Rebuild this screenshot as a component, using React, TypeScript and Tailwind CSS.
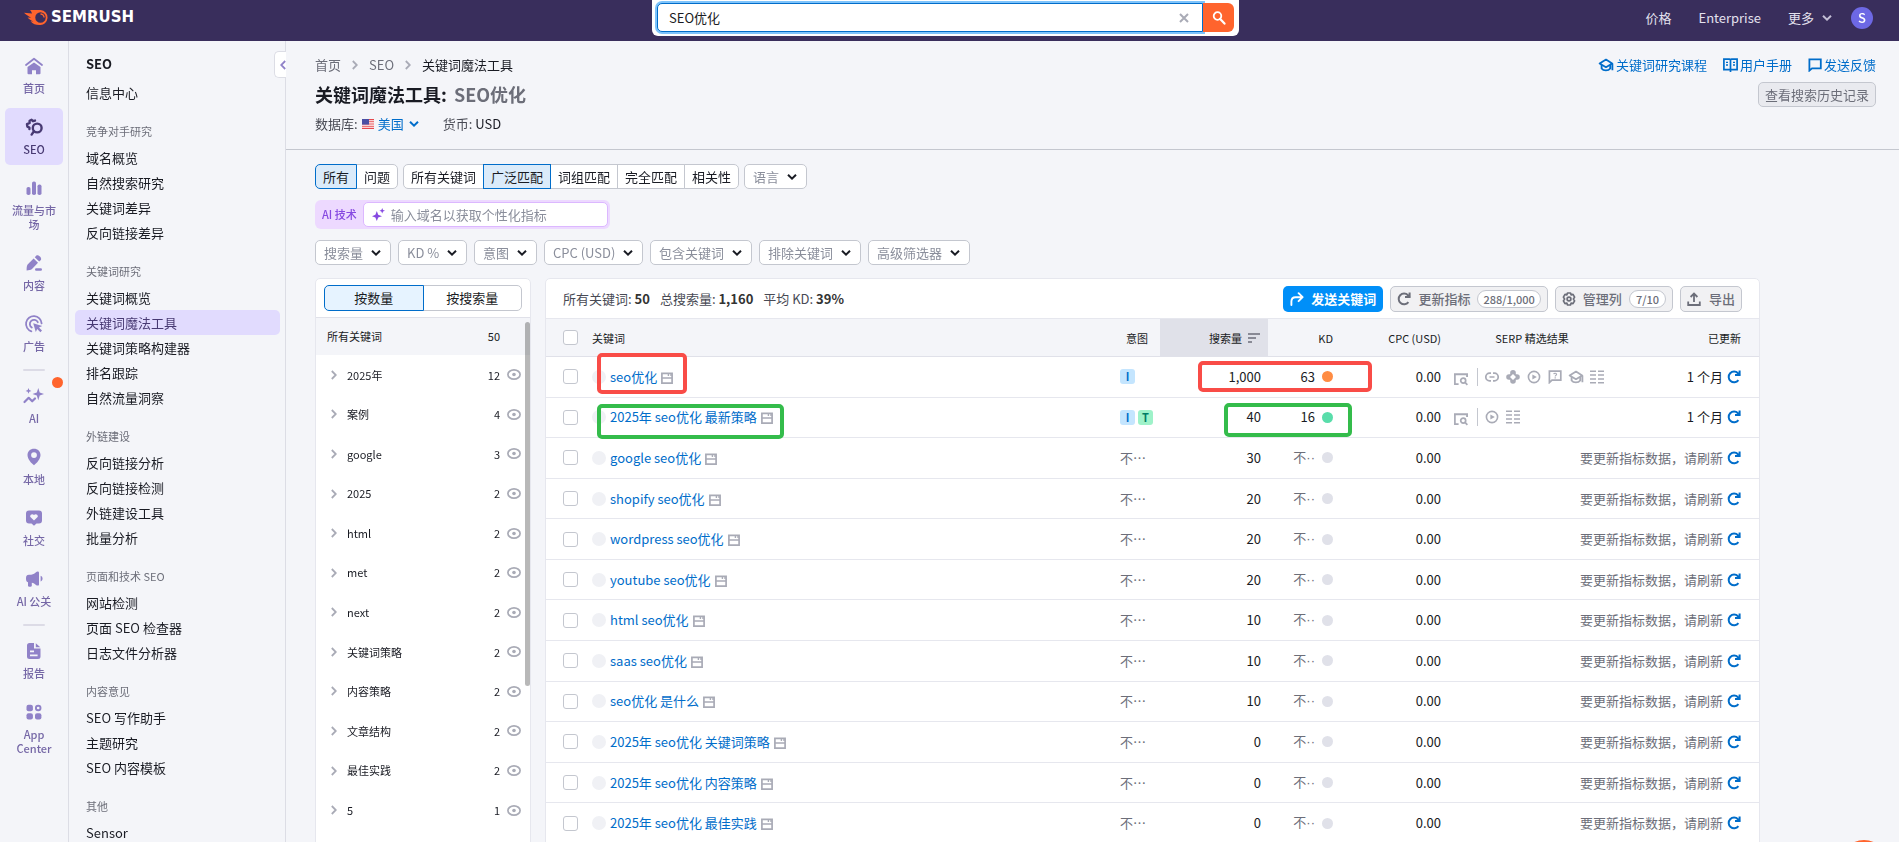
import React, { useState } from 'react';
import clsx from 'clsx';

interface IconProps {
  className?: string;
}

interface RailEntry {
  label: string;
  icon: React.ReactNode;
  active?: boolean;
  dot?: boolean;
  divider?: boolean;
}

interface Keyword {
  text: string;
  volume: string;
  kd?: { value: string; color: string };
  intents?: string[];
  serp?: string[];
  updated?: string;
  keywordMark?: string;
  metricMark?: string;
}

/* ---------- icons ---------- */

function ChevronDown({ className }: IconProps) {
  return (
    <svg viewBox="0 0 10 6" fill="none" stroke="currentColor" strokeWidth="2" className={clsx('h-[6px] w-[10px]', className)}>
      <path d="M1 .8 5 4.6 9 .8" />
    </svg>
  );
}

function ChevronRight({ className }: IconProps) {
  return (
    <svg viewBox="0 0 6 10" fill="none" stroke="currentColor" strokeWidth="1.8" className={clsx('h-[10px] w-[6px]', className)}>
      <path d="M.8 1 4.8 5 .8 9" />
    </svg>
  );
}

function Refresh({ className }: IconProps) {
  return (
    <svg viewBox="0 0 14 14" fill="none" stroke="currentColor" strokeWidth="2" className={clsx('h-[14px] w-[14px]', className)}>
      <path d="M11.4 10.2A5.4 5.4 0 1 1 11 3.2L12.6 5" />
      <path d="M12.6 .6V5H8" />
    </svg>
  );
}

function Cap({ className }: IconProps) {
  return (
    <svg viewBox="0 0 16 14" fill="none" stroke="currentColor" strokeWidth="1.8" className={clsx('h-[14px] w-[16px]', className)}>
      <path d="M1.6 5.4 8 1.6l6.2 3.8L8 9.2z" strokeLinejoin="round" />
      <path d="M3.6 7v3.4C5.4 13 10.4 13 12.2 10.4V7M14.4 5.4v6.8" />
    </svg>
  );
}

function Sparkles({ className }: IconProps) {
  return (
    <svg viewBox="0 0 13 13" fill="currentColor" className={clsx('h-[13px] w-[13px] shrink-0', className)}>
      <path d="M4.8 3 6.2 6.8 10 8.2 6.2 9.6 4.8 13 3.4 9.6 0 8.2 3.4 6.8z" />
      <path d="M10.2 0 11 2l2 .8-2 .8-.8 2-.8-2-2-.8 2-.8z" />
    </svg>
  );
}

function Eye() {
  return (
    <svg viewBox="0 0 14 11" fill="none" stroke="#a9abb6" strokeWidth="1.7" className="h-[11px] w-[14px]">
      <ellipse cx="7" cy="5.5" rx="6.1" ry="4.6" />
      <circle cx="7" cy="5.5" r="1.8" fill="#a9abb6" stroke="none" />
    </svg>
  );
}

function SerpPage() {
  return (
    <svg viewBox="0 0 12 12" fill="none" stroke="#a9abb6" strokeWidth="1.7" className="mt-0.5 h-[12px] w-[12px]">
      <path d="M.9 1.4H11.1V11.1H.9zM.9 6H11.1" />
      <path d="M7.4 1v3M10 1v3" strokeWidth="1.4" />
    </svg>
  );
}

function SerpIcon({ name }: { name: string }) {
  const common = 'h-[14px] w-[14px]';
  switch (name) {
    case 'link':
      return (
        <svg viewBox="0 0 14 14" fill="none" stroke="currentColor" strokeWidth="1.7" className={common}>
          <path d="M6 3.2H4.6a3.8 3.8 0 0 0 0 7.6H6M8 3.2h1.4a3.8 3.8 0 0 1 0 7.6H8M4.5 7h5" />
        </svg>
      );
    case 'pack':
      return (
        <svg viewBox="0 0 14 14" fill="currentColor" fillRule="evenodd" className={common}>
          <path d="M7 0a2.8 2.8 0 0 1 2.8 3v1.2H11a2.8 2.8 0 0 1 0 5.6H9.8V11a2.8 2.8 0 0 1-5.6 0V9.8H3a2.8 2.8 0 0 1 0-5.6h1.2V3A2.8 2.8 0 0 1 7 0zm0 4L4 7l3 3 3-3z" />
        </svg>
      );
    case 'video':
      return (
        <svg viewBox="0 0 14 14" fill="none" stroke="currentColor" strokeWidth="1.6" className={common}>
          <circle cx="7" cy="7" r="5.6" />
          <path d="M5.4 4.4v5.2L9.8 7z" fill="currentColor" stroke="none" />
        </svg>
      );
    case 'faq':
      return (
        <svg viewBox="0 0 14 14" fill="none" stroke="currentColor" strokeWidth="1.7" className={common}>
          <path d="M1.4 12.6V1.2H12.8V10.2H4z" />
          <path d="M5.7 4.2c.4-1.4 3-1.2 2.8.3-.1.9-1.3.9-1.3 1.9M7.2 7.3v1.2" strokeWidth="1.2" />
        </svg>
      );
    case 'cap':
      return <Cap className="-mx-px" />;
    case 'list':
      return (
        <svg viewBox="0 0 14 14" fill="none" stroke="currentColor" strokeWidth="1.6" className={common}>
          <path d="M0 1.2h6M8 1.2h6M0 5h6M8 5h6M0 9h6M8 9h6M0 12.8h6M8 12.8h6" />
        </svg>
      );
    default:
      return (
        <svg viewBox="0 0 14 14" fill="none" stroke="currentColor" strokeWidth="1.7" className={clsx(common, 'mt-1')}>
          <path d="M4.6 12.2H.9V2.4" />
          <path d="M0 2.2h14M13.1 2v3" strokeWidth="2" />
          <circle cx="9.2" cy="8.6" r="2.5" />
          <path d="m11 10.4 2.4 2.4" />
        </svg>
      );
  }
}

const rail: RailEntry[] = [
  {
    label: '首页',
    icon: (
      <>
        <path d="M1 8 9 1.8 17 8" fill="none" stroke="currentColor" strokeWidth="1.8" strokeLinecap="round" strokeLinejoin="round" />
        <path d="M9 5.4 15.5 10v6.2a1 1 0 0 1-1 1H11v-4H7v4H3.5a1 1 0 0 1-1-1V10z" />
      </>
    ),
  },
  {
    label: 'SEO',
    active: true,
    icon: (
      <>
        <circle cx="12.2" cy="10" r="4.4" fill="none" stroke="currentColor" strokeWidth="2.4" />
        <path d="M9 13.2 6.6 16.6" stroke="currentColor" strokeWidth="2.4" strokeLinecap="round" />
        <path d="M10 2.6 8 3.2 6.6 1.8 4.6 2.8V5L2 6.2 2.4 8.6 4.4 9.6V11" fill="none" stroke="currentColor" strokeWidth="2.4" strokeLinecap="round" strokeLinejoin="round" />
      </>
    ),
  },
  {
    label: '流量与市场',
    icon: (
      <>
        <rect x="1.5" y="8" width="4" height="8" rx="1.8" />
        <rect x="7" y="2.5" width="4" height="13.5" rx="1.8" />
        <rect x="12.5" y="5.5" width="4" height="10.5" rx="1.8" />
      </>
    ),
  },
  {
    label: '内容',
    icon: (
      <>
        <path d="M8.6 4.4 13 8.8 7 15c-1 1-3.4 1.4-5.4 1.5C1.6 14.5 1.6 12 2.6 10.6z" />
        <path d="m9.8 3.2 1.6-1.7c1.6-1.4 5.8 2 4.5 4.4L14.2 7.6z" />
        <rect x="10" y="14.2" width="7" height="2.6" rx="1.3" />
      </>
    ),
  },
  {
    label: '广告',
    icon: (
      <>
        <path d="M6.4 16.3A7.8 7.8 0 1 1 16.6 8.4M6.8 12.6A4.2 4.2 0 1 1 12.8 7.2" fill="none" stroke="currentColor" strokeWidth="1.8" strokeLinecap="round" />
        <path d="m8.2 8.2 9 2.8-3.2 1.4 3 3.2-1.6 1.6-3.2-3.2-1.4 3z" />
      </>
    ),
  },
  {
    label: 'AI',
    divider: true,
    dot: true,
    icon: (
      <>
        <path d="M13.3 1 14.7 5.4 19 7l-4.3 1.6-1.4 4.6-1.5-4.6L7.5 7l4.3-1.6zM3.5 1 4.3 3 6.4 3.9 4.3 4.7 3.5 6.8 2.7 4.7.6 3.9 2.7 3z" />
        <path d="m-.5 15 4.2-4.2 3.5 3.5 2.8-2.8" fill="none" stroke="currentColor" strokeWidth="2.2" strokeLinecap="round" strokeLinejoin="round" />
      </>
    ),
  },
  {
    label: '本地',
    icon: <path fillRule="evenodd" d="M9 .8c3.8 0 6.5 2.6 6.5 6.2 0 4.2-3.7 8-6.5 10.3C6.2 15 2.5 11.2 2.5 7 2.5 3.4 5.2.8 9 .8zM9 4.2a2.9 2.9 0 1 0 0 5.8 2.9 2.9 0 0 0 0-5.8z" />,
  },
  {
    label: '社交',
    icon: <path fillRule="evenodd" d="M4 1.6h10a3 3 0 0 1 3 3v6.8a3 3 0 0 1-3 3h-2.5L9 16.8l-2.5-2.4H4a3 3 0 0 1-3-3V4.6a3 3 0 0 1 3-3zM9 11.6 12.6 8c1-1.9-1.9-4-3.6-1.9C7.3 4 4.4 6.1 5.4 8z" />,
  },
  {
    label: 'AI 公关',
    icon: (
      <>
        <path d="M11 2.2c1-.9 3-.8 3 .6v11.6c0 1.4-2 1.5-3 .6-1.3-1.2-2.4-2-4.2-2.3V16c0 1-3.8 1-3.8 0v-3.8C1.4 11.8 1 10.6 1 8.6 1 6 1.6 4.8 4 4.8c3 0 5-.8 7-2.6z" />
        <path d="M15.6 5.8c2.6.6 2.6 5 0 5.6z" />
      </>
    ),
  },
  {
    label: '报告',
    divider: true,
    icon: <path fillRule="evenodd" d="M4.5 1H9v5.5h6.5v8a2.5 2.5 0 0 1-2.5 2.5H4.5A2.5 2.5 0 0 1 2 14.5v-11A2.5 2.5 0 0 1 4.5 1zm6.3.3 4.5 3.9h-4.5zM5 8.600v1.600h4V8.600zm0 4v1.700h7.600v-1.700z" />,
  },
  {
    label: 'App Center',
    icon: (
      <>
        <rect x="1.5" y="1.8" width="6.4" height="6.4" rx="2" />
        <rect x="1.5" y="10.2" width="6.4" height="6.4" rx="2" />
        <rect x="10" y="10.2" width="6.4" height="6.4" rx="2" />
        <circle cx="13.2" cy="5" r="2.3" fill="none" stroke="currentColor" strokeWidth="1.9" />
      </>
    ),
  },
];

const sections = [
  { title: '竞争对手研究', items: ['域名概览', '自然搜索研究', '关键词差异', '反向链接差异'] },
  { title: '关键词研究', items: ['关键词概览', '关键词魔法工具', '关键词策略构建器', '排名跟踪', '自然流量洞察'] },
  { title: '外链建设', items: ['反向链接分析', '反向链接检测', '外链建设工具', '批量分析'] },
  { title: '页面和技术 SEO', items: ['网站检测', '页面 SEO 检查器', '日志文件分析器'] },
  { title: '内容意见', items: ['SEO 写作助手', '主题研究', 'SEO 内容模板'] },
  { title: '其他', items: ['Sensor'] },
];

const groups: [string, number][] = [
  ['2025年', 12],
  ['案例', 4],
  ['google', 3],
  ['2025', 2],
  ['html', 2],
  ['met', 2],
  ['next', 2],
  ['关键词策略', 2],
  ['内容策略', 2],
  ['文章结构', 2],
  ['最佳实践', 2],
  ['5', 1],
];

const keywords: Keyword[] = [
  {
    text: 'seo优化',
    volume: '1,000',
    kd: { value: '63', color: 'bg-[#ff8c43]' },
    intents: ['I'],
    serp: ['link', 'pack', 'video', 'faq', 'cap', 'list'],
    updated: '1 个月',
    keywordMark: 'border-[#f94c47] left-[5px] -top-1 h-[41px] w-[90px]',
    metricMark: 'border-[#f94c47] left-[38px] top-1 h-[31px] w-[174px]',
  },
  {
    text: '2025年 seo优化 最新策略',
    volume: '40',
    kd: { value: '16', color: 'bg-[#59ddaa]' },
    intents: ['I', 'T'],
    serp: ['video', 'list'],
    updated: '1 个月',
    keywordMark: 'border-[#34bc4b] left-[5px] top-[6px] h-[35px] w-[187px]',
    metricMark: 'border-[#34bc4b] left-[64px] top-[5px] h-[34px] w-[128px]',
  },
  { text: 'google seo优化', volume: '30' },
  { text: 'shopify seo优化', volume: '20' },
  { text: 'wordpress seo优化', volume: '20' },
  { text: 'youtube seo优化', volume: '20' },
  { text: 'html seo优化', volume: '10' },
  { text: 'saas seo优化', volume: '10' },
  { text: 'seo优化 是什么', volume: '10' },
  { text: '2025年 seo优化 关键词策略', volume: '0' },
  { text: '2025年 seo优化 内容策略', volume: '0' },
  { text: '2025年 seo优化 最佳实践', volume: '0' },
];

/* ---------- small controls ---------- */

function Checkbox({ label }: { label: string }) {
  return (
    <input
      type="checkbox"
      aria-label={label}
      className="block h-[15px] w-[15px] appearance-none rounded-[3px] border border-[#c4c7cf] bg-white checked:bg-[#008ff8]"
    />
  );
}

function FilterSelect({ label }: { label: string }) {
  return (
    <div className="relative">
      <select
        aria-label={label}
        className="block h-[25px] appearance-none rounded-[5px] border border-[#c4c7cf] bg-white pr-[26px] pl-2 text-[13px] leading-[20px] text-[#8a8e9b]"
      >
        <option>{label}</option>
      </select>
      <ChevronDown className="pointer-events-none absolute top-[10px] right-[10px] text-[#191b23]" />
    </div>
  );
}

function Segmented({ options, initial }: { options: string[]; initial: string }) {
  const [selected, setSelected] = useState(initial);
  return (
    <div className="flex">
      {options.map((option) => (
        <button
          key={option}
          onClick={() => setSelected(option)}
          className={clsx(
            '-ml-px h-[25px] border px-[7px] first:ml-0 first:rounded-l-[5px] last:rounded-r-[5px]',
            selected === option ? 'z-10 border-[#006dca] bg-[#dbebfa]' : 'border-[#c4c7cf] bg-white'
          )}
        >
          {option}
        </button>
      ))}
    </div>
  );
}

/* ---------- page parts ---------- */

function TopBar() {
  return (
    <header className="grid h-[41px] shrink-0 grid-cols-[1fr_587px_1fr] items-start bg-[#392e5c] pr-[26px] pl-[18px]">
      <a href="#" className="flex h-[34px] items-center gap-[3px] pl-[6px] text-white" aria-label="Semrush">
        <svg viewBox="0 0 24 15" className="h-[15px] w-[24px]">
          <path
            fill="#ff642d"
            fillRule="evenodd"
            d="M6 0h10.5a7.5 7.5 0 1 1-1 15C11.5 15 9 14 6.5 11.2l3 .2C7 10.6 5 9 3.6 7.4l3.6.3C5 6.4 2 4.6 0 2.7l8 .9C7.5 2 7 1 6 0zm10.5 2.2a5.2 5.2 0 1 0 0 10.5 5.2 5.2 0 0 0 0-10.5z"
          />
          <path d="M16.5 4a3.6 3.6 0 0 1 3.6 3.6" fill="none" stroke="#ff642d" strokeWidth="1.4" />
        </svg>
        <span className="font-['DejaVu_Sans',sans-serif] text-[15px] font-bold">SEMRUSH</span>
      </a>
      <form className="flex h-[36px] rounded-b-[6px] bg-white px-[5px] pt-[3px] pb-1">
        <div className="flex flex-1 items-center rounded-l-[5px] border border-[#006dca] bg-white ring-2 ring-[#7fc4fb]">
          <input aria-label="搜索" defaultValue="SEO优化" className="h-full flex-1 bg-transparent pl-[11px] text-[13px] outline-none" autoFocus />
          <button type="button" aria-label="清除" className="px-[13px] text-[#a9abb6]">
            <svg viewBox="0 0 10 10" stroke="currentColor" strokeWidth="2" className="h-[10px] w-[10px]">
              <path d="m1 1 8 8M9 1 1 9" />
            </svg>
          </button>
        </div>
        <button type="button" aria-label="搜索" className="flex w-[31px] items-center justify-center rounded-r-[6px] bg-[#ff642d] text-white">
          <svg viewBox="0 0 14 14" fill="none" stroke="currentColor" className="h-[14px] w-[14px]">
            <circle cx="5.5" cy="5" r="3.8" strokeWidth="1.8" />
            <path d="m8.2 8 4.3 4.6" strokeWidth="2.2" strokeLinecap="round" />
          </svg>
        </button>
      </form>
      <nav className="flex h-[36px] items-center justify-end gap-[27px] text-[#e4e1ee]">
        <a href="#">价格</a>
        <a href="#">Enterprise</a>
        <button className="flex items-center gap-2">
          更多
          <ChevronDown className="text-[#c4bfd6]" />
        </button>
        <button className="-ml-2 h-[22px] w-[22px] rounded-full bg-[#6d68e4] text-[13px] font-medium text-white">S</button>
      </nav>
    </header>
  );
}

function Rail() {
  return (
    <nav className="flex w-[69px] shrink-0 flex-col gap-1 border-r border-[#dcdde5] px-[5px] pt-[6px]">
      {rail.map((entry) => (
        <React.Fragment key={entry.label}>
          {entry.divider && <div className="mt-[3px] mb-0.5 h-0.5 w-[22px] shrink-0 self-center rounded bg-[#dcdbe6]" />}
          <a
            href="#"
            className={clsx(
              'relative flex shrink-0 flex-col items-center gap-[6px] rounded-[5px] px-[6px] pt-[10px] pb-[9px] text-center text-[11px] leading-[14px] font-medium',
              entry.active ? 'bg-[#e1dbfe] text-[#483a73]' : 'text-[#7567a6]'
            )}
          >
            <svg
              viewBox="0 0 18 18"
              fill="currentColor"
              className={clsx('h-[18px] w-[18px] shrink-0 overflow-visible', !entry.active && 'text-[#9082c8]')}
            >
              {entry.icon}
            </svg>
            <span>{entry.label}</span>
            {entry.dot && <span className="absolute top-0 right-0 h-[11px] w-[11px] rounded-full bg-[#ff642d]" />}
          </a>
        </React.Fragment>
      ))}
    </nav>
  );
}

function SideNav() {
  return (
    <nav className="relative w-[217px] shrink-0 border-r border-[#dcdde5] px-[5px] pt-[10px] pl-[6px]">
      <h2 className="pl-[11px] text-[13px] leading-[26px] font-bold">SEO</h2>
      <a href="#" className="mt-[3px] block pl-[11px] leading-[25px]">
        信息中心
      </a>
      {sections.map((section) => (
        <div key={section.title} className="mt-3">
          <h3 className="pl-[11px] text-[11px] leading-[28px] text-[#6c6e79]">{section.title}</h3>
          {section.items.map((item) => (
            <a
              key={item}
              href="#"
              className={clsx('block rounded-[5px] pl-[11px] leading-[25px]', item === '关键词魔法工具' && 'bg-[#e1dbfe] text-[#483a73]')}
            >
              {item}
            </a>
          ))}
        </div>
      ))}
      <button
        aria-label="收起菜单"
        className="absolute top-[10px] -right-px flex h-[27px] w-[12px] items-center justify-end overflow-hidden rounded-l-[5px] border border-r-0 border-[#dcdde5] bg-white text-[#9082c8]"
      >
        <ChevronRight className="shrink-0 rotate-180" />
      </button>
    </nav>
  );
}

function PageHeader() {
  return (
    <div className="flex h-[109px] shrink-0 justify-between border-b border-[#c4c7cf] pt-[14px] pr-[23px] pl-[29px]">
      <div>
        <div className="flex items-center gap-[11px] leading-[20px] text-[#6c6e79]">
          <a href="#">首页</a>
          <ChevronRight className="text-[#a9abb6]" />
          <a href="#">SEO</a>
          <ChevronRight className="text-[#a9abb6]" />
          <span className="text-[#191b23]">关键词魔法工具</span>
        </div>
        <h1 className="mt-[6px] text-[18px] leading-[26px] font-bold">
          关键词魔法工具: <span className="ml-[3px] text-[#6c6e79]">SEO优化</span>
        </h1>
        <div className="mt-[7px] flex items-center leading-[20px]">
          <span className="text-[#484a54]">数据库:</span>
          <button className="ml-1 flex items-center gap-1 text-[#006dca]">
            <svg viewBox="0 0 12 10" className="h-[10px] w-[12px]">
              <path fill="#fff" d="M0 0h12v10H0z" />
              <path stroke="#e5484d" strokeWidth="1.1" d="M0 .6h12M0 2.8h12M0 5h12M0 7.2h12M0 9.4h12" />
              <path fill="#4a4fa3" d="M0 0h7v5.6H0z" />
            </svg>
            美国
            <ChevronDown className="ml-px" />
          </button>
          <span className="ml-6 text-[#484a54]">货币:</span>
          <span className="ml-[3px]">USD</span>
        </div>
      </div>
      <div className="flex flex-col items-end">
        <div className="flex gap-4 leading-[20px] text-[#006dca]">
          <a href="#" className="flex items-center gap-0.5">
            <Cap />
            关键词研究课程
          </a>
          <a href="#" className="flex items-center gap-0.5">
            <svg viewBox="0 0 15 14" fill="none" stroke="currentColor" strokeWidth="1.7" className="h-[14px] w-[15px]">
              <path d="M7.5 2.2V14M7.5 11.6H.9V1.2h5.6q1 0 1 1.2 0-1.2 1-1.2h5.6v10.4z" />
              <path d="M3 4.4h2M3 7h2M10 4.4h2M10 7h2" strokeWidth="1.4" />
            </svg>
            用户手册
          </a>
          <a href="#" className="flex items-center gap-0.5">
            <svg viewBox="0 0 14 14" fill="none" stroke="currentColor" strokeWidth="1.8" className="h-[14px] w-[14px]">
              <path d="M1.4 12.6V1.4H12.8V10.4H4z" />
            </svg>
            发送反馈
          </a>
        </div>
        <button className="mt-[7px] h-[25px] rounded-[5px] border border-[#c4c7cf] bg-[#e9eaef] px-[6px] leading-[20px] text-[#6c6e79]">
          查看搜索历史记录
        </button>
      </div>
    </div>
  );
}

function GroupPanel() {
  const [mode, setMode] = useState('按数量');
  return (
    <aside className="relative w-[216px] shrink-0 rounded-t-[5px] border border-[#e6e7ee] bg-white">
      <div className="flex border-b border-[#e0e1e9] px-2 py-[6px]">
        {['按数量', '按搜索量'].map((name) => (
          <button
            key={name}
            onClick={() => setMode(name)}
            className={clsx(
              'h-[26px] flex-1 border text-[13px] first:rounded-l-[5px] last:-ml-px last:rounded-r-[5px]',
              mode === name ? 'z-10 border-[#006dca] bg-[#e6f3ff]' : 'border-[#c4c7cf] bg-white'
            )}
          >
            {name}
          </button>
        ))}
      </div>
      <div className="flex h-[37px] items-center justify-between bg-[#f4f5f9] pr-[30px] pl-[11px] text-[11px]">
        <span>所有关键词</span>
        <span>50</span>
      </div>
      <ul className="flex h-[475px] flex-col text-[11px]">
        {groups.map(([name, count]) => (
          <li key={name} className="flex flex-1 items-center pr-[9px] pl-[15px]">
            <ChevronRight className="text-[#a9abb6]" />
            <span className="ml-[10px] flex-1">{name}</span>
            <span>{count}</span>
            <button aria-label={`查看 ${name}`} className="ml-[7px]">
              <Eye />
            </button>
          </li>
        ))}
      </ul>
      <div className="absolute top-[43px] right-0 h-[364px] w-[5px] rounded-full bg-black/28" />
    </aside>
  );
}

function Mark({ className }: { className: string }) {
  return <span className={clsx('pointer-events-none absolute z-20 rounded-[5px] border-4', className)} />;
}

function KeywordRow({ keyword }: { keyword: Keyword }) {
  const { kd, intents, serp } = keyword;
  return (
    <tr className="border-b border-[#e6e7ee]">
      <td className="pl-[17px]">
        <Checkbox label={keyword.text} />
      </td>
      <td className="relative">
        <div className="flex items-center">
          <span className="h-[14px] w-[14px] rounded-full bg-[#f0f1f5]" />
          <a href="#" className="mx-1 text-[#006dca]">
            {keyword.text}
          </a>
          <SerpPage />
        </div>
        {keyword.keywordMark && <Mark className={keyword.keywordMark} />}
      </td>
      <td className="pl-2 text-[#6c6e79]">
        {intents ? (
          <div className="flex gap-[3px]">
            {intents.map((intent) => (
              <span
                key={intent}
                className={clsx(
                  'h-[15px] w-[15px] rounded-[3px] text-center text-[11px] leading-[15px] font-bold',
                  intent === 'I' ? 'bg-[#c4e5fe] text-[#006dca]' : 'bg-[#9ef2c9] text-[#007c65]'
                )}
              >
                {intent}
              </span>
            ))}
          </div>
        ) : (
          '不⋯'
        )}
      </td>
      <td className="relative pr-[7px] text-right">
        {keyword.volume}
        {keyword.metricMark && <Mark className={keyword.metricMark} />}
      </td>
      <td className="pr-[13px]">
        <div className="flex items-center justify-end gap-[7px] whitespace-nowrap">
          {kd ? (
            <span>{kd.value}</span>
          ) : (
            <span className="font-['Liberation_Sans','Noto_Sans_CJK_SC',sans-serif] text-[#6c6e79]">不··</span>
          )}
          <span className={clsx('h-[11px] w-[11px] rounded-full', kd ? kd.color : 'bg-[#e0e1e9]')} />
        </div>
      </td>
      <td className="pr-[13px] text-right">0.00</td>
      {serp && (
        <td>
          <div className="flex items-center text-[#a9abb6]">
            <SerpIcon name="page" />
            <span className="ml-[9px] h-[18px] w-px bg-[#c4c7cf]" />
            <span className="ml-[7px] flex items-center gap-[7px]">
              {serp.map((name) => (
                <SerpIcon key={name} name={name} />
              ))}
            </span>
          </div>
        </td>
      )}
      <td colSpan={serp ? 1 : 2} className="pr-[18px]">
        <div className="flex items-center justify-end gap-1">
          {keyword.updated ? <span>{keyword.updated}</span> : <span className="text-[#6c6e79]">要更新指标数据，请刷新</span>}
          <button aria-label="刷新" className="text-[#006dca]">
            <Refresh />
          </button>
        </div>
      </td>
    </tr>
  );
}

function KeywordPanel() {
  const toolButton = 'flex h-[26px] items-center rounded-[5px] border border-[#c4c7cf] bg-[#f1f1f3] px-[6px] font-medium text-[#6c6e79]';
  return (
    <section className="min-w-0 flex-1 rounded-t-[5px] border border-[#e6e7ee] bg-white">
      <div className="flex h-[39px] items-center justify-between px-[17px]">
        <div className="flex gap-[10px] text-[#484a54]">
          <span>
            所有关键词: <b className="text-[#333]">50</b>
          </span>
          <span>
            总搜索量: <b className="text-[#333]">1,160</b>
          </span>
          <span>
            平均 KD: <b className="text-[#333]">39%</b>
          </span>
        </div>
        <div className="flex gap-[7px]">
          <button className="flex h-[26px] items-center gap-[7px] rounded-[5px] bg-[#008ff8] px-[7px] font-bold text-white">
            <svg viewBox="0 0 14 14" fill="none" stroke="currentColor" strokeWidth="1.9" className="h-[14px] w-[14px]">
              <path d="M1.4 13V9.5Q1.4 5.2 5.6 5.2H12M8.6 1.2 12.6 5.2 8.6 9.2" strokeLinecap="round" strokeLinejoin="round" />
            </svg>
            发送关键词
          </button>
          <button className={toolButton}>
            <Refresh className="mr-[7px]" />
            更新指标
            <span className="ml-[7px] rounded-full border border-[#c4c7cf] bg-white px-[5px] text-[11px] leading-[16px]">288/1,000</span>
          </button>
          <button className={toolButton}>
            <svg viewBox="0 0 14 14" fill="none" stroke="currentColor" strokeWidth="1.7" className="mr-[7px] h-[14px] w-[14px]">
              <path d="M5.5 1h3l.6 1.8 1.9-.4 1.6 2.7L11.4 7l1.2 1.9-1.6 2.7-1.9-.4-.6 1.8h-3l-.6-1.8-1.9.4-1.6-2.7L2.6 7 1.4 5.1 3 2.4l1.9.4z" strokeLinejoin="round" />
              <circle cx="7" cy="7" r="1.9" />
            </svg>
            管理列
            <span className="ml-[7px] rounded-full border border-[#c4c7cf] bg-white px-[6px] text-[11px] leading-[16px]">7/10</span>
          </button>
          <button className={toolButton}>
            <svg viewBox="0 0 14 14" fill="none" stroke="currentColor" strokeWidth="1.8" className="mr-2 h-[14px] w-[14px]">
              <path d="M1.2 9.5V13h11.6V9.5M7 10V2M3.6 5 7 1.6 10.4 5" />
            </svg>
            导出
          </button>
        </div>
      </div>
      <table className="h-[526px] w-full table-fixed border-collapse text-[13px] leading-[20px]">
        <colgroup>
          <col className="w-[46px]" />
          <col />
          <col className="w-[48px]" />
          <col className="w-[108px]" />
          <col className="w-[78px]" />
          <col className="w-[108px]" />
          <col className="w-[156px]" />
          <col className="w-[149px]" />
        </colgroup>
        <thead className="bg-[#f4f5f9] text-[11px]">
          <tr className="h-[38px] border-t border-b border-[#e0e1e9] border-t-[#e6e7ee]">
            <th className="pl-[17px]">
              <Checkbox label="全选" />
            </th>
            <th className="text-left font-normal">关键词</th>
            <th className="pr-3 text-right font-normal whitespace-nowrap">意图</th>
            <th className="bg-[#e0e1e9] pr-2 font-normal">
              <div className="flex items-center justify-end gap-[6px]">
                搜索量
                <svg viewBox="0 0 12 10" stroke="#6c6e79" strokeWidth="1.7" className="h-[10px] w-[12px]">
                  <path d="M0 1h12M0 5h8M0 9h4" />
                </svg>
              </div>
            </th>
            <th className="pr-[13px] text-right font-normal">KD</th>
            <th className="pr-[13px] text-right font-normal">CPC (USD)</th>
            <th className="text-center font-normal">SERP 精选结果</th>
            <th className="pr-[18px] text-right font-normal">已更新</th>
          </tr>
        </thead>
        <tbody>
          {keywords.map((keyword) => (
            <KeywordRow key={keyword.text} keyword={keyword} />
          ))}
        </tbody>
      </table>
    </section>
  );
}

export default function App() {
  return (
    <div className="relative flex h-screen flex-col overflow-hidden bg-[#f4f5f9] font-['Noto_Sans_CJK_SC',sans-serif] text-[13px] text-[#191b23]">
      <TopBar />
      <div className="flex min-h-0 flex-1">
        <Rail />
        <SideNav />
        <main className="flex min-w-0 flex-1 flex-col">
          <PageHeader />
          <div className="flex flex-col gap-[11px] pt-[14px] pl-[29px]">
            <div className="flex gap-[5px]">
              <Segmented options={['所有', '问题']} initial="所有" />
              <Segmented options={['所有关键词', '广泛匹配', '词组匹配', '完全匹配', '相关性']} initial="广泛匹配" />
              <FilterSelect label="语言" />
            </div>
            <label className="flex h-[29px] w-[295px] items-center rounded-[6px] bg-[#edd9ff] pr-[2px] pl-[7px] text-[11px] font-medium text-[#8649e1]">
              AI 技术
              <span className="ml-[6px] flex h-[25px] flex-1 items-center rounded-[5px] border border-[#dcb8ff] bg-white pl-2">
                <Sparkles />
                <input
                  placeholder="输入域名以获取个性化指标"
                  className="ml-[6px] w-full min-w-0 bg-transparent text-[13px] font-normal text-[#191b23] outline-none placeholder:text-[#8a8e9b]"
                />
              </span>
            </label>
            <div className="flex gap-[7px]">
              {['搜索量', 'KD %', '意图', 'CPC (USD)', '包含关键词', '排除关键词', '高级筛选器'].map((name) => (
                <FilterSelect key={name} label={name} />
              ))}
            </div>
          </div>
          <div className="mt-[13px] flex w-full max-w-[1474px] gap-[14px] pl-[29px]">
            <GroupPanel />
            <KeywordPanel />
          </div>
        </main>
      </div>
      <button aria-label="帮助" className="absolute right-[10px] -bottom-[48px] h-[50px] w-[50px] rounded-full bg-[#ff642d]" />
    </div>
  );
}
